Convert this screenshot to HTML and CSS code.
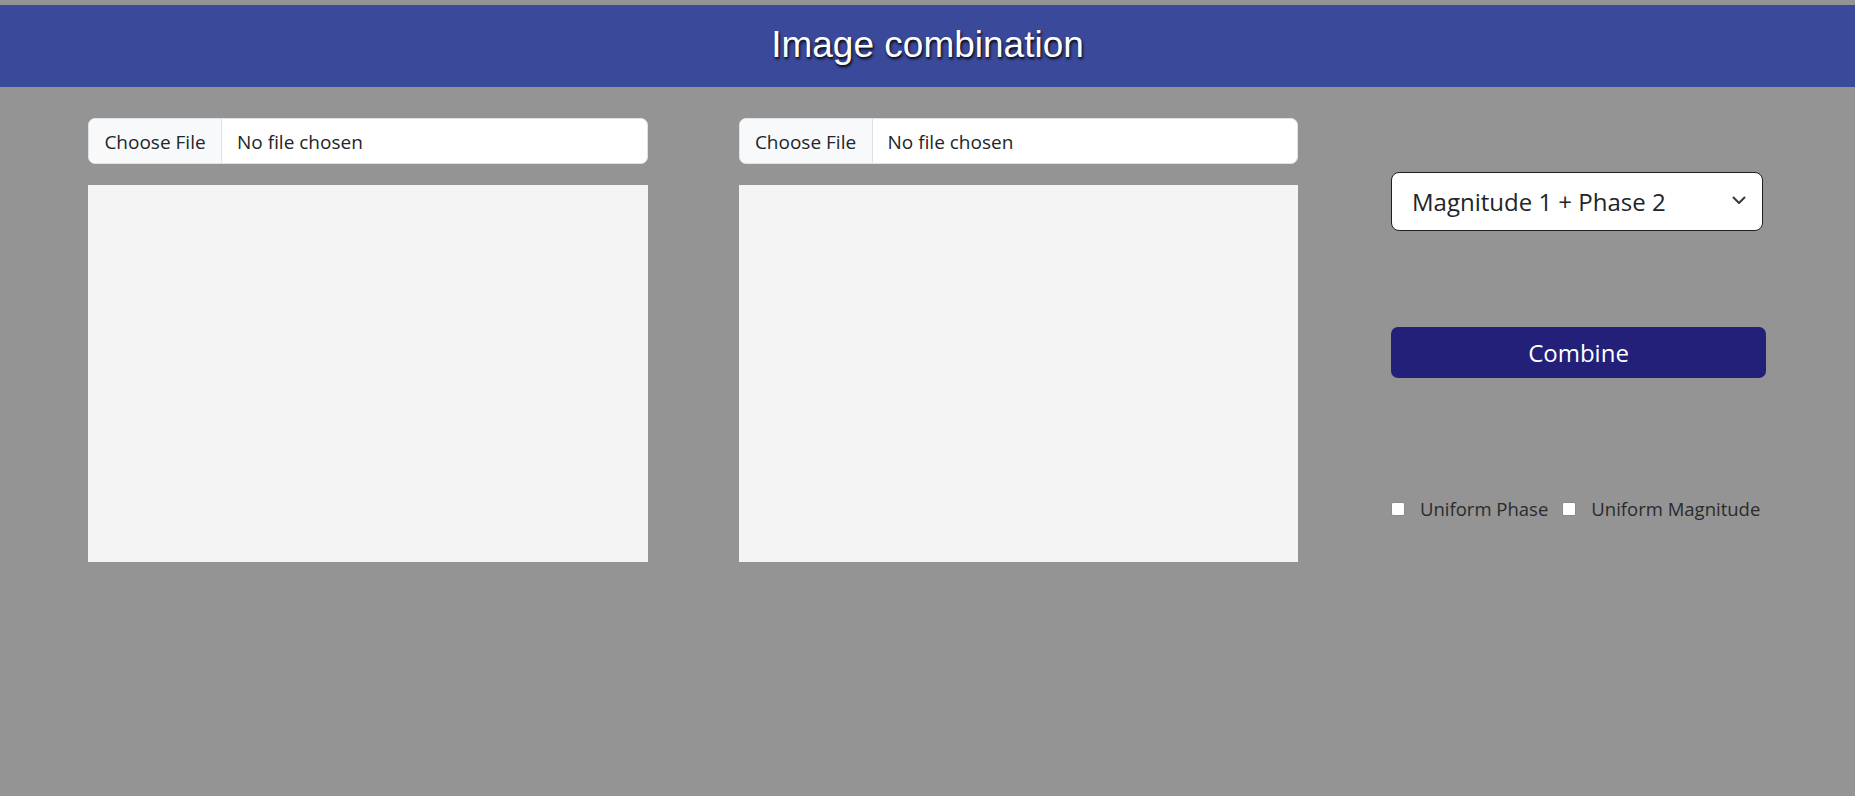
FILE: index.html
```html
<!DOCTYPE html>
<html lang="en">
<head>
<meta charset="utf-8">
<title>Image combination</title>
<link rel="stylesheet" href="styles.css">
</head>
<body>
<header class="topbar">
  <h1 class="title">Image combination</h1>
</header>
<main class="content">
  <section class="image-col">
    <label class="file-input">
      <span class="file-btn">Choose File</span>
      <span class="file-name">No file chosen</span>
    </label>
    <div class="image-box"></div>
  </section>
  <section class="image-col">
    <label class="file-input">
      <span class="file-btn">Choose File</span>
      <span class="file-name">No file chosen</span>
    </label>
    <div class="image-box"></div>
  </section>
  <section class="controls">
    <div class="select-wrap">
      <select class="mode-select">
        <option>Magnitude 1 + Phase 2</option>
        <option>Magnitude 2 + Phase 1</option>
      </select>
      <svg class="chevron" width="14" height="9" viewBox="0 0 14 9"><path d="M1.5 1.5 L7 7 L12.5 1.5" fill="none" stroke="#343a40" stroke-width="2" stroke-linecap="round" stroke-linejoin="round"/></svg>
    </div>
    <button class="combine-btn" type="button">Combine</button>
    <div class="checks">
      <label class="check"><input type="checkbox" class="check-box"><span>Uniform Phase</span></label>
      <label class="check"><input type="checkbox" class="check-box"><span>Uniform Magnitude</span></label>
    </div>
  </section>
</main>
</body>
</html>
```

FILE: styles.css
```css
html, body {
  margin: 0;
  padding: 0;
}
body {
  background: #949494;
  padding-top: 5px;
  font-family: "Open Sans", "Noto Sans", sans-serif;
  color: #212529;
  min-height: 791px;
}
.topbar {
  background: #3b499b;
  height: 82px;
  display: flex;
  align-items: center;
  justify-content: center;
}
.title {
  margin: 0;
  font-family: "Liberation Sans", Arial, sans-serif;
  font-weight: 400;
  font-size: 37px;
  color: #ffffff;
  text-shadow: 1px 2px 3px #000000;
  line-height: 1;
  padding-bottom: 4px;
}
.content {
  display: flex;
  align-items: flex-start;
  padding: 31px 89px 0 88px;
  gap: 91px;
}
.image-col {
  width: 560px;
  display: flex;
  flex-direction: column;
  gap: 21px;
}
.file-input {
  display: flex;
  height: 46px;
  box-sizing: border-box;
  background: #ffffff;
  border: 1px solid #dee2e6;
  border-radius: 7px;
  overflow: hidden;
  font-size: 19px;
  align-items: stretch;
}
.file-btn {
  display: flex;
  align-items: center;
  background: #f8f9fa;
  border-right: 1px solid #dee2e6;
  width: 133px;
  box-sizing: border-box;
  justify-content: center;
  padding-top: 1px;
}
.file-name {
  display: flex;
  align-items: center;
  padding-left: 15px;
  padding-top: 1px;
}
.image-box {
  height: 377px;
  background: #f4f4f4;
}
.controls {
  width: 375px;
  margin-left: 2px;
  display: flex;
  flex-direction: column;
  padding-top: 54px;
}
.select-wrap {
  position: relative;
  width: 372px;
}
.mode-select {
  appearance: none;
  -webkit-appearance: none;
  width: 100%;
  height: 59px;
  box-sizing: border-box;
  border: 1px solid #1f1f1f;
  border-radius: 8px;
  background: #ffffff;
  font-family: "Open Sans", "Noto Sans", sans-serif;
  font-size: 24px;
  color: #212529;
  padding: 0 40px 0 20px;
  outline: none;
}
.chevron {
  position: absolute;
  right: 17px;
  top: 24px;
}
.combine-btn {
  margin-top: 96px;
  width: 375px;
  height: 51px;
  border: none;
  border-radius: 7px;
  background: #23207a;
  color: #ffffff;
  font-family: "Open Sans", "Noto Sans", sans-serif;
  font-size: 24px;
  padding: 0;
}
.checks {
  margin-top: 118px;
  display: flex;
  align-items: center;
  gap: 14px;
  white-space: nowrap;
}
.check {
  display: flex;
  align-items: center;
  gap: 15px;
  font-size: 18.5px;
  color: #2b2b2b;
  flex-shrink: 0;
}
.check-box {
  appearance: none;
  -webkit-appearance: none;
  margin: 0;
  width: 14px;
  height: 14px;
  box-sizing: border-box;
  background: #ffffff;
  border: 1px solid #8a8a8a;
  border-radius: 2px;
  flex-shrink: 0;
}
```
